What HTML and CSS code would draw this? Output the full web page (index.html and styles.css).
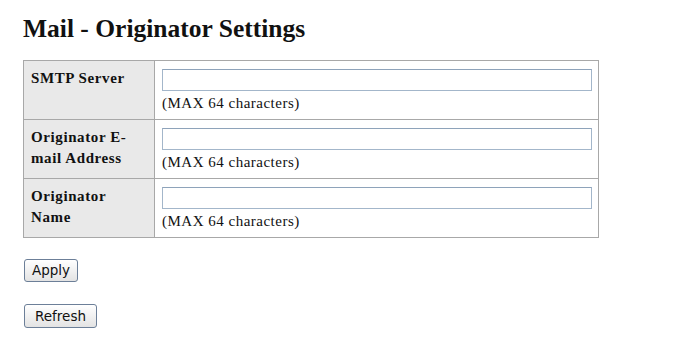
FILE: index.html
```html
<!DOCTYPE html>
<html>
<head>
<meta charset="utf-8">
<title>Mail - Originator Settings</title>
<link rel="stylesheet" href="styles.css">
</head>
<body>
<h1 class="title">Mail - Originator Settings</h1>
<table class="settings">
  <tr>
    <th class="label">SMTP Server</th>
    <td class="field"><input class="text-input" type="text"><div class="hint">(MAX 64 characters)</div></td>
  </tr>
  <tr>
    <th class="label">Originator E-<br>mail Address</th>
    <td class="field"><input class="text-input" type="text"><div class="hint">(MAX 64 characters)</div></td>
  </tr>
  <tr>
    <th class="label">Originator<br>Name</th>
    <td class="field"><input class="text-input" type="text"><div class="hint">(MAX 64 characters)</div></td>
  </tr>
</table>
<div class="actions">
  <button class="btn btn-apply" type="button">Apply</button>
  <button class="btn btn-refresh" type="button">Refresh</button>
</div>
</body>
</html>
```
FILE: styles.css
```css
html, body {
  margin: 0;
  padding: 0;
  background: #ffffff;
}
body {
  padding: 0 0 0 23px;
  font-family: "Liberation Serif", "Times New Roman", serif;
  color: #111;
}
.title {
  margin: 0;
  padding-top: 14px;
  height: 60px;
  box-sizing: border-box;
  font-size: 25.5px;
  font-weight: bold;
  line-height: 30px;
  color: #111;
}
.settings {
  border-collapse: collapse;
  border: 1px solid #8a8a8a;
  width: 576px;
}
.settings th, .settings td {
  border: 1px solid #a8a8a8;
  vertical-align: top;
  height: 59px;
  box-sizing: border-box;
  padding: 0;
}
.label {
  width: 131px;
  background: #e9e9e9;
  text-align: left;
  font-size: 15px;
  letter-spacing: 0.6px;
  font-weight: bold;
  line-height: 21px;
  padding: 7px 8px 0 7px !important;
}
.field {
  padding: 8px 6px 0 7px !important;
}
.text-input {
  display: block;
  box-sizing: border-box;
  width: 430px;
  height: 22px;
  margin: 0;
  border: 1px solid #a3b6ca;
  border-top-color: #8ea3ba;
  background: #fff;
  padding: 0 2px;
}
.hint {
  font-size: 15px;
  letter-spacing: 0.5px;
  line-height: 20px;
  margin-top: 2px;
}
.actions {
  display: flex;
  flex-direction: column;
  align-items: flex-start;
  gap: 22px;
  padding-top: 21px;
}
.btn {
  font-family: "DejaVu Sans", sans-serif;
  font-size: 13.5px;
  height: 23px;
  box-sizing: border-box;
  margin: 0 0 0 1px;
  padding: 0 7px;
  border: 1px solid #6c7f98;
  border-radius: 3px;
  background: linear-gradient(#ffffff, #e3e3e3);
  color: #111;
  line-height: 21px;
}
.btn-refresh {
  height: 24px;
  padding: 0 10px;
}
```
